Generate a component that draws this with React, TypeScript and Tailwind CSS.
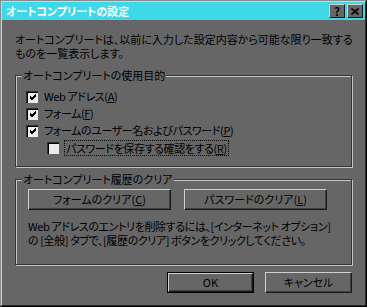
import type { FC, ReactNode } from 'react';

const Key: FC<{ k: string }> = ({ k }) => (
  <>
    (<span className="underline">{k}</span>)
  </>
);

const Check: FC<{ checked?: boolean }> = ({ checked }) => (
  <span className="w-[12px] h-[12px] shrink-0 bg-[#ececec] border-t border-l border-[#303030] border-r-[#d0d0d0] border-b-[#d0d0d0] shadow-[inset_1px_1px_0_#000] flex items-center justify-center">
    {checked && (
      <svg width="8" height="8" viewBox="0 0 8 8">
        <path d="M1 3 L3 5 L7 1 M1 4 L3 6 L7 2 M1 5 L3 7 L7 3" stroke="#000" strokeWidth="1" fill="none" />
      </svg>
    )}
  </span>
);

const Button: FC<{ children: ReactNode; className?: string; primary?: boolean }> = ({ children, className = '', primary }) => (
  <div className={`${primary ? 'border border-black' : ''} ${className}`}>
    <div className="h-full w-full bg-[#666] border border-t-[#d0d0d0] border-l-[#d0d0d0] border-r-[#1a1a1a] border-b-[#1a1a1a] shadow-[inset_-1px_-1px_0_#404040] flex items-center justify-center leading-none">
      {children}
    </div>
  </div>
);

const Group: FC<{ label: string; className?: string; children: ReactNode }> = ({ label, className = '', children }) => (
  <div className={`relative border border-[#363636] shadow-[inset_1px_1px_0_#c4c4c4,1px_1px_0_#c4c4c4] ${className}`}>
    <span className="absolute -top-[8px] left-[6px] bg-[#666] px-[1px] leading-[14px] whitespace-nowrap">{label}</span>
    {children}
  </div>
);

const App: FC = () => {
  return (
    <div className="w-[367px] h-[307px] bg-[#666] text-black text-[11px] [font-family:'Noto_Sans_CJK_JP','Noto_Sans',sans-serif] [font-feature-settings:'palt'] border border-t-[#8a8a8a] border-l-[#8a8a8a] border-r-black border-b-black">
      <div className="h-full w-full flex flex-col border border-t-[#d4d4d4] border-l-[#d4d4d4] border-r-[#2a2a2a] border-b-[#2a2a2a]">
        <div className="h-[18px] bg-[#3ed8e8] flex items-center justify-between pl-[4px] pr-[2px]">
          <span className="text-white font-bold leading-none">オートコンプリートの設定</span>
          <div className="flex gap-[2px]">
            <span className="w-[16px] h-[14px] bg-[#666] border border-t-[#d0d0d0] border-l-[#d0d0d0] border-r-[#1a1a1a] border-b-[#1a1a1a] flex items-center justify-center font-bold text-[11px] leading-none">?</span>
            <span className="w-[16px] h-[14px] bg-[#666] border border-t-[#d0d0d0] border-l-[#d0d0d0] border-r-[#1a1a1a] border-b-[#1a1a1a] flex items-center justify-center">
              <svg width="8" height="7" viewBox="0 0 8 7">
                <path d="M0.5 0.5 L7.5 6.5 M7.5 0.5 L0.5 6.5" stroke="#000" strokeWidth="1.6" />
              </svg>
            </span>
          </div>
        </div>

        <div className="flex-1 flex flex-col px-[13px]">
          <p className="mt-[12px] leading-[14px] whitespace-nowrap">
            オートコンプリートは、以前に入力した設定内容から可能な限り一致する
            <br />
            ものを一覧表示します。
          </p>

          <Group label="オートコンプリートの使用目的" className="mt-[15px] h-[92px] pt-[12px] pl-[10px]">
            <div className="flex flex-col tracking-[-0.4px]">
              <label className="h-[17px] flex items-center gap-[6px]">
                <Check checked />
                <span>Web アドレス<Key k="A" /></span>
              </label>
              <label className="h-[17px] flex items-center gap-[6px]">
                <Check checked />
                <span>フォーム<Key k="F" /></span>
              </label>
              <label className="h-[17px] flex items-center gap-[6px]">
                <Check checked />
                <span>フォームのユーザー名およびパスワード<Key k="P" /></span>
              </label>
              <label className="h-[17px] flex items-center gap-[5px] pl-[21px]">
                <Check />
                <span className="border border-dotted border-black px-[1px] leading-[14px]">
                  パスワードを保存する確認をする<Key k="R" />
                </span>
              </label>
            </div>
          </Group>

          <Group label="オートコンプリート履歴のクリア" className="mt-[12px] h-[86px] pt-[9px] px-[12px]">
            <div className="flex gap-[13px]">
              <Button className="w-[143px] h-[21px]">フォームのクリア<Key k="C" /></Button>
              <Button className="w-[143px] h-[21px]">パスワードのクリア<Key k="L" /></Button>
            </div>
            <p className="mt-[9px] leading-[14px] whitespace-nowrap tracking-[-0.4px]">
              Web アドレスのエントリを削除するには、[インターネット オプション]
              <br />
              の [全般] タブで、[履歴のクリア] ボタンをクリックしてください。
            </p>
          </Group>

          <div className="mt-[7px] flex justify-end gap-[11px]">
            <Button primary className="w-[87px] h-[21px]">OK</Button>
            <Button className="w-[87px] h-[21px]">キャンセル</Button>
          </div>
        </div>
      </div>
    </div>
  );
};

export default App;
